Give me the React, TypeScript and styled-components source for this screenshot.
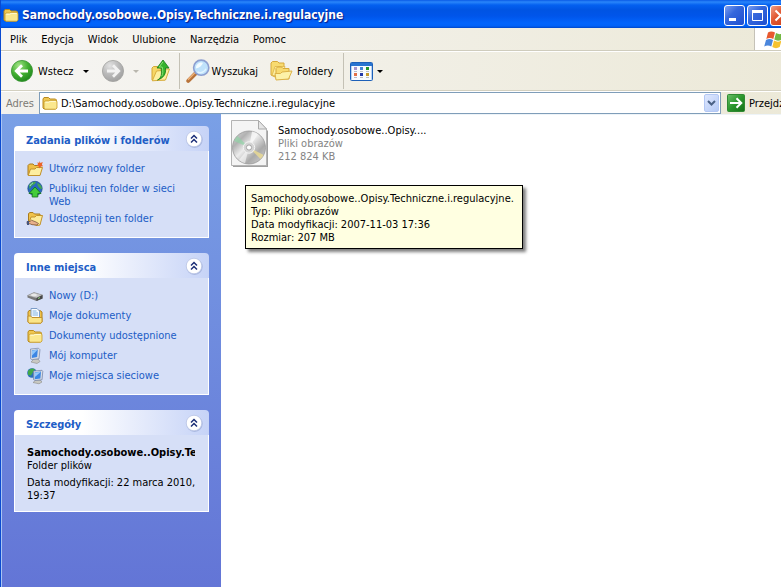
import React from "react";
import styled, { createGlobalStyle, css } from "styled-components";

const GlobalStyle = createGlobalStyle`
  * { box-sizing: border-box; }
  html, body { margin: 0; padding: 0; background: #fff; }
  body, button, input {
    font-family: "DejaVu Sans Condensed", "DejaVu Sans", Tahoma, sans-serif;
    font-size: 11px;
    line-height: 13px;
    color: #000;
  }
  button { margin: 0; padding: 0; border: 0; background: none; white-space: nowrap; }
  svg { display: block; flex: none; overflow: visible; }
`;

const Screen = styled.div`
  min-height: 100vh;
  overflow: hidden;
  display: flex;
`;

/* The window reaches past the right edge of the screen. */
const Window = styled.div`
  flex: none;
  width: calc(100% + 14px);
  display: flex;
  flex-direction: column;
  border-left: 1px solid #0a4ad0;
  background: #fff;
`;

const TitleBar = styled.header`
  height: 28px;
  padding: 2px 4px 0 2px;
  display: flex;
  align-items: center;
  gap: 3px;
  background: linear-gradient(#0a5ae6 0, #2a86fa 2px, #0460f0 5px, #0054e3 10px, #0055ea 16px, #0264fc 23px, #0162f8 26px, #0046c8 28px);
`;

const Title = styled.h1`
  flex: 1;
  margin: 0;
  font: bold 12px/18px "DejaVu Sans Condensed", "DejaVu Sans", sans-serif;
  color: #fff;
  text-shadow: 1px 1px 1px #0a1883;
  white-space: nowrap;
`;

const WindowControls = styled.div`
  display: flex;
  gap: 2px;
`;

const WindowButton = styled.button<{ $close?: boolean }>`
  width: 21px;
  height: 21px;
  border: 1px solid #fff;
  border-radius: 3px;
  display: grid;
  place-items: center;
  background: ${(p) =>
    p.$close
      ? "linear-gradient(135deg, #f0a088, #e25a34 40%, #c83814)"
      : "linear-gradient(135deg, #7c9ff0, #3567dc 40%, #1f4fd0)"};
`;

const MenuRow = styled.div`
  height: 23px;
  display: flex;
  border-bottom: 1px solid #cfccbd;
  background: linear-gradient(90deg, #f6f5f3, #ece9d8);
`;

const MenuBar = styled.nav`
  flex: 1;
  display: flex;
  align-items: center;
  padding-left: 2px;
`;

const MenuButton = styled.button`
  height: 100%;
  padding: 0 7px;
`;

const Brand = styled.div`
  width: 41px;
  padding-left: 9px;
  display: flex;
  align-items: center;
  border-left: 1px solid #c5c2b8;
  background: #fff;
`;

const Toolbar = styled.div`
  height: 40px;
  padding-left: 9px;
  display: flex;
  align-items: center;
  border-top: 1px solid #fff;
  border-bottom: 1px solid #d3d0c0;
  background: linear-gradient(90deg, #f6f5f3, #ece9d8);
`;

const ToolButton = styled.button<{ $gap?: number; $after?: number }>`
  height: 32px;
  display: flex;
  align-items: center;
  gap: ${(p) => p.$gap ?? 4}px;
  margin-right: ${(p) => p.$after ?? 0}px;
`;

const Separator = styled.div`
  width: 1px;
  height: 36px;
  margin-right: 6px;
  background: #c4c1b5;
`;

const AddressBar = styled.div`
  height: 23px;
  display: flex;
  align-items: center;
  border-top: 1px solid #fff;
  background: linear-gradient(90deg, #f2f1ed, #ece9d8);
`;

const AddressLabel = styled.label`
  width: 38px;
  padding-left: 5px;
  color: #7c7a74;
`;

const AddressField = styled.div`
  flex: 1;
  height: 22px;
  padding: 0 1px 0 2px;
  display: flex;
  align-items: center;
  gap: 3px;
  border: 1px solid #7f9db9;
  background: #fff;
`;

const AddressInput = styled.input`
  flex: 1;
  min-width: 0;
  padding: 0;
  border: 0;
  outline: 0;
  background: transparent;
`;

const DropButton = styled.button`
  width: 15px;
  height: 18px;
  border: 1px solid #b4c8f4;
  border-radius: 2px;
  display: grid;
  place-items: center;
  background: linear-gradient(135deg, #dfe8fe, #b5caf6);
`;

const GoButton = styled.button`
  width: 68px;
  margin-left: 6px;
  display: flex;
  align-items: center;
  gap: 4px;
`;

const Body = styled.div`
  flex: 1;
  display: flex;
`;

const Sidebar = styled.aside`
  flex: none;
  width: 220px;
  padding: 12px;
  display: flex;
  flex-direction: column;
  gap: 15px;
  border-left: 1px solid #a8c4f4;
  background: linear-gradient(#7aa0e6, #6375d6);
`;

const Panel = styled.section`
  border-radius: 4px 4px 0 0;
  overflow: hidden;
`;

const PanelHeader = styled.div`
  height: 25px;
  padding: 0 6px 0 12px;
  display: flex;
  align-items: center;
  justify-content: space-between;
  background: linear-gradient(90deg, #fff 35%, #c6d3f7);
`;

const PanelTitle = styled.h2`
  margin: 0;
  padding-top: 4px;
  font-size: 11px;
  line-height: 13px;
  font-weight: bold;
  color: #215dc6;
  white-space: nowrap;
`;

const PanelBody = styled.div`
  padding: 11px 8px 9px 12px;
  display: flex;
  flex-direction: column;
  gap: 4px;
  border: 1px solid #fff;
  border-top: 0;
  background: #d6dff7;
`;

const TaskLink = styled.a`
  min-height: 16px;
  padding-right: 8px;
  display: flex;
  align-items: flex-start;
  gap: 6px;
  color: #215dc6;
  text-decoration: none;
`;

const IconSlot = styled.span`
  flex: none;
  width: 16px;
  height: 13px;
  display: flex;
  align-items: center;
`;

const DetailText = styled.p<{ $strong?: boolean }>`
  margin: 0;
  ${(p) =>
    p.$strong &&
    css`
      margin-right: 5px;
      font-weight: bold;
      white-space: nowrap;
      overflow: hidden;
    `}
`;

const FileArea = styled.main`
  position: relative;
  flex: 1;
  padding: 5px 10px;
  border-top: 1px solid #eef4f8;
`;

const FileTile = styled.button`
  display: flex;
  gap: 10px;
  text-align: left;
`;

const FileMeta = styled.span`
  display: block;
  padding-top: 4px;
`;

const FileLine = styled.span<{ $muted?: boolean }>`
  display: block;
  color: ${(p) => (p.$muted ? "#848484" : "#000")};
`;

const Tooltip = styled.div`
  position: absolute;
  left: 24px;
  top: 70px;
  min-width: 278px;
  padding: 6px 5px 4px;
  border: 1px solid #000;
  background: #ffffe1;
  box-shadow: 3px 3px 3px rgba(0, 0, 0, 0.5);
  white-space: nowrap;
`;

/* ---------- icons ---------- */

const FolderIcon = ({ size = 16 }: { size?: number }) => (
  <svg width={size} height={size} viewBox="0 0 16 16">
    <path d="M1 13V4l1-1.5h4.5L8 4h5.5l1 1v8l-1 1H2z" fill="#efc650" stroke="#b88a1e" />
    <path d="M2 13V7.5L3 6h3.5L8 5.5h6.5L15 7v6l-1.5 1.2H3z" fill="#fbe88e" stroke="#c79a2a" strokeWidth=".8" />
    <path d="M3.3 7.2h3.5L8.2 6.4h5.6" stroke="#fffbd8" fill="none" />
  </svg>
);

const Caret = ({ muted }: { muted?: boolean }) => (
  <svg width="6" height="3" viewBox="0 0 6 3">
    <path d="M0 0h6L3 3z" fill={muted ? "#b9b7ae" : "#000"} />
  </svg>
);

const CircleArrow = ({ forward }: { forward?: boolean }) => {
  const id = forward ? "fwd" : "back";
  return (
    <svg width="24" height="24" viewBox="0 0 24 24">
      <defs>
        <radialGradient id={id} cx=".35" cy=".25" r=".85">
          <stop offset="0" stopColor={forward ? "#e2e2e2" : "#a2e486"} />
          <stop offset=".5" stopColor={forward ? "#b9b9b9" : "#43b032"} />
          <stop offset="1" stopColor={forward ? "#9b9b9b" : "#19801a"} />
        </radialGradient>
      </defs>
      <circle cx="12" cy="12" r="10.6" fill={`url(#${id})`} stroke={forward ? "#a2a2a0" : "#3a9433"} strokeWidth=".8" />
      <path
        d={forward ? "M6 12h11M12 6.3l5.7 5.7-5.7 5.7" : "M18 12H7M12 6.3L6.3 12l5.7 5.7"}
        fill="none"
        stroke={forward ? "#f2f2f2" : "#fff"}
        strokeWidth="2.8"
      />
    </svg>
  );
};

const UpFolder = () => (
  <svg width="20" height="24" viewBox="0 0 20 24">
    <path d="M1 21V9l1.5-1.5h4L8 9h6v12z" fill="#f6d765" stroke="#d3a637" />
    <path d="M1.3 21.8L5.5 12l5-.5L12 10h6.5l-4 11z" fill="#fdf0a0" stroke="#d9ae40" />
    <path d="M6.5 21c4-2 4.5-6 3.5-12H6l6-8 6 8h-3.5c.8 6-2 10-8 12z" fill="#35b22c" stroke="#157a16" strokeWidth=".8" />
    <path d="M12 2.8L8.2 8h3c1 4 .8 7-.5 9.3" fill="none" stroke="#8ae070" />
  </svg>
);

const SearchIcon = () => (
  <svg width="24" height="24" viewBox="0 0 24 24">
    <path d="M2.2 21.8L10 14" stroke="#b8733a" strokeWidth="4" strokeLinecap="round" />
    <path d="M2 20.8L9 13.8" stroke="#f0b47a" strokeWidth="1.3" />
    <circle cx="15.2" cy="8.7" r="7.6" fill="#bfe2fb" stroke="#8d9fd0" strokeWidth="1.6" />
    <path d="M10 9.5a5.400 5.400 0 0 1 7-5.800c-1 3-3.500 5-7 5.800z" fill="#f2fbff" />
    <path d="M11.5 12.8c3 1.800 7 .6 8.500-3" stroke="#e3f5ff" strokeWidth="1.5" fill="none" />
  </svg>
);

const FoldersIcon = () => (
  <svg width="23" height="22" viewBox="0 0 23 22">
    <path d="M1 15V3l1.500-1.500h5L9 3h5v4L5 17z" fill="#f8db70" stroke="#d6a93c" />
    <path d="M2 15.500L5 6.500h10L12 16z" fill="#fdf0a4" stroke="#dcb248" strokeWidth=".8" />
    <path d="M6 19V8.500L7.500 7h4L13 8.500h6V19z" fill="#f8db70" stroke="#d6a93c" />
    <path d="M6 20l-1-6.500h5.500L12 12l10-1-3.500 8z" fill="#fdf2a8" stroke="#dcb248" />
  </svg>
);

const ViewsIcon = () => (
  <svg width="23" height="19" viewBox="0 0 23 19">
    <rect x=".5" y=".5" width="22" height="18" rx="1" fill="#f8fbff" stroke="#1d60b8" />
    <path d="M1 1h21v3H1z" fill="#2874d0" />
    <path d="M1.500 4v14M21.500 4v14" stroke="#b8d2f2" />
    {["#a694cc", "#3f84d8", "#239428", "#e27048", "#2238a8", "#c69a2c"].map((c, i) => (
      <rect key={c} x={4 + (i % 3) * 6} y={i < 3 ? 5 : 11} width="3" height="3" fill={c} />
    ))}
    {[4, 10, 16].map((x) => (
      <path key={x} d={`M${x} 9.500h3M${x} 15.500h3`} stroke="#b8bcc8" />
    ))}
  </svg>
);

const FlagIcon = () => (
  <svg width="21" height="19" viewBox="0 0 21 19">
    <path d="M4 2.500C6 1 8.500 1 11 2.500L9.300 9C7 7.500 4.500 7.500 2.300 9z" fill="#e8592f" />
    <path d="M12 3c2.500 1.500 5 1.500 7.500 0l-1.800 6.500c-2.400 1.500-5 1.500-7.400 0z" fill="#73b843" />
    <path d="M2 10c2.400-1.500 4.800-1.300 7 0l-1.700 6.500C5 15 2.500 15 .2 16.500z" fill="#4a86dc" />
    <path d="M10 10.500c2.500 1.500 5 1.500 7.500 0L15.700 17c-2.400 1.500-5 1.500-7.400 0z" fill="#f6c22f" />
  </svg>
);

const GoIcon = () => (
  <svg width="18" height="18" viewBox="0 0 18 18">
    <defs>
      <linearGradient id="go" x2="1" y2="1">
        <stop stopColor="#6cc06a" />
        <stop offset=".5" stopColor="#2a962c" />
        <stop offset="1" stopColor="#157018" />
      </linearGradient>
    </defs>
    <rect x=".5" y=".5" width="17" height="17" rx="1" fill="url(#go)" stroke="#2f8a33" />
    <path d="M3 9h11M9.500 4.200L14.300 9l-4.800 4.800" stroke="#fff" strokeWidth="2" fill="none" />
  </svg>
);

const Chevron = () => (
  <svg width="9" height="6" viewBox="0 0 9 6">
    <path d="M1 1l3.500 3.500L8 1" stroke="#4a6185" strokeWidth="2" fill="none" />
  </svg>
);

const CollapseIcon = () => (
  <svg width="18" height="18" viewBox="0 0 18 18">
    <circle cx="9.500" cy="9.800" r="8.200" fill="#9aaad6" opacity=".7" />
    <circle cx="9" cy="9" r="7.800" fill="#fff" stroke="#b9c4e4" strokeWidth=".8" />
    <path d="M6 8.500l3-3 3 3M6 12.500l3-3 3 3" stroke="#1c2f78" strokeWidth="1.500" fill="none" />
  </svg>
);

const NewFolderIcon = () => (
  <svg width="16" height="16" viewBox="0 0 16 16">
    <path d="M1 14V4.500L2.500 3H6l1.500 1.500H13V14z" fill="#f0bf45" stroke="#a97b1e" />
    <path d="M1.200 14.500L3.500 8H8l1.500-1.500h6L13 14.500z" fill="#fdeea0" stroke="#c2922c" />
    <path d="M12.500 0l.9 2.100L15.800 1l-.9 2.500 1.100 1.700-2.300.2-1.200 2-.8-2.100-2.200-.5L11 3.300l-.6-2 1.800.6z" fill="#ec6428" />
  </svg>
);

const PublishIcon = () => (
  <svg width="16" height="16" viewBox="0 0 16 16">
    <circle cx="8" cy="7.500" r="7.200" fill="#2869bd" stroke="#174a86" strokeWidth=".7" />
    <path d="M2 4c2-3 5-3.500 7-3-1 2-1 2.500-3 3S4 7 2.500 8zM10 2c3 1 5 3 5 6-2 0-4-2-5-6z" fill="#46a850" />
    <path d="M3 5c1-2 2-2.500 3-3" stroke="#a6dcf0" fill="none" />
    <path d="M8 6l6 6.500h-3.200V16H5.200v-3.500H2z" fill="#43cc3a" stroke="#127018" strokeWidth=".8" />
  </svg>
);

const ShareIcon = () => (
  <svg width="16" height="16" viewBox="0 0 16 16">
    <path d="M1.500 11V2.500L3 1.500h3L7.500 3H13v8z" fill="#f0c24a" stroke="#a97b1e" />
    <path d="M2 12L4 6h4l1.500-1.500h6L13 14l-3 .5z" fill="#fdeb98" stroke="#c2922c" />
    <path d="M0 10.500h3l1.500-1.300L9 11l2.500 1.500L10 14l-5-.3L3 12.800H0z" fill="#e8b08a" stroke="#6e4b38" strokeWidth=".7" />
    <path d="M0 10v4h2v-4z" fill="#45557e" />
  </svg>
);

const DriveIcon = () => (
  <svg width="16" height="16" viewBox="0 0 16 16">
    <path d="M.5 7.500L7 4.500l8.500 2.500v3.500L9.500 13 .5 9.500z" fill="#777" />
    <path d="M.5 7.500L7 4.500l8.500 2.500-6 3z" fill="#c9c9c9" stroke="#8d8d8d" strokeWidth=".5" />
    <path d="M9.500 10l6-3v3.500L9.500 13z" fill="#484848" />
    <ellipse cx="7" cy="7" rx="3" ry="1.200" fill="#e8e8e8" />
    <path d="M11 10.500l2-1" stroke="#8fd27a" />
  </svg>
);

const DocumentsIcon = () => (
  <svg width="16" height="16" viewBox="0 0 16 16">
    <path d="M1 14V4l1-1.500h11L15 4v10l-1 1H2z" fill="#f0c24a" stroke="#b0811c" />
    <path d="M4 .5h6L12.500 3v8H4z" fill="#f8fcff" stroke="#7c9cc8" />
    <path d="M5.500 3h4M5.500 5h5.500M5.500 7h5.500" stroke="#7fb2e2" />
    <path d="M1 8h2.500L5 9.500h10V14l-1 1.200H2L1 14z" fill="#fbe588" stroke="#c2922c" />
  </svg>
);

const ComputerIcon = () => (
  <svg width="16" height="16" viewBox="0 0 16 16">
    <path d="M4 14l3-3h4l2 2.500-3 2z" fill="#c9c9c2" stroke="#8b8b86" strokeWidth=".6" />
    <path d="M3.500 1l8-.8 1.500 1.500-1 9-7 1-1.500-1z" fill="#d8dce4" stroke="#7585a6" strokeWidth=".7" />
    <path d="M4.800 2.200l6-.6-.7 7.500-5.300.8z" fill="#3c86e4" />
    <path d="M5 2.400l5.600-.6L5 7.500z" fill="#90c6fa" />
  </svg>
);

const NetworkIcon = () => (
  <svg width="16" height="16" viewBox="0 0 16 16">
    <circle cx="5" cy="5" r="4.800" fill="#2b6fb8" />
    <path d="M1 3c2-3 5-3 7-2L6 4 4 7.500 1 7z" fill="#42a84a" />
    <path d="M6 14.500L9 12h4l2 2-3 1.800z" fill="#c9c9c2" stroke="#8b8b86" strokeWidth=".6" />
    <path d="M6.500 3l8.500-.7.800 1-.8 8.500-7 .7-1.500-1z" fill="#d8dce4" stroke="#6d7da2" strokeWidth=".7" />
    <path d="M7.700 4.200l6.300-.6-.6 7-5.700.7z" fill="#3c86e4" />
    <path d="M7.900 4.400l5.800-.5-5.800 5z" fill="#96cafa" />
  </svg>
);

const DiscImageIcon = () => (
  <svg width="37" height="47" viewBox="0 0 37 47">
    <defs>
      <linearGradient id="disc" x2="1" y2="1">
        <stop stopColor="#d9d9d9" />
        <stop offset=".25" stopColor="#b2b2b2" />
        <stop offset=".45" stopColor="#ececec" />
        <stop offset=".7" stopColor="#a9a9a9" />
        <stop offset="1" stopColor="#d6d6d6" />
      </linearGradient>
    </defs>
    <path d="M2 2h26l9 9v36H2z" fill="#777" opacity=".7" />
    <path d="M.5.5h27L35.500 9v36.500H.5z" fill="#f4f4f4" stroke="#b3b3b3" />
    <path d="M27.500.5V9h8z" fill="#e5e5e5" stroke="#aaa" />
    <circle cx="18" cy="27.500" r="16.500" fill="url(#disc)" stroke="#999" strokeWidth=".8" />
    <path d="M18 27.500L3 21a16.500 16.500 0 0 1 3.500-5z" fill="#8ed6a4" opacity=".65" />
    <path d="M18 27.500L21 11.500a16.500 16.500 0 0 1 6 2.500z" fill="#fafafa" opacity=".8" />
    <path d="M18 27.500L29.500 39a16.500 16.500 0 0 0 3-4z" fill="#ecdc92" opacity=".8" />
    <path d="M18 27.500L8 40a16.500 16.500 0 0 0 6 3.300z" fill="#fff" opacity=".55" />
    <circle cx="18" cy="27.500" r="5.700" fill="#d4d4d4" stroke="#f4f4f4" />
    <circle cx="18" cy="27.500" r="2.600" fill="#fff" stroke="#a4a4a4" />
  </svg>
);

/* ---------- page ---------- */

const menus = ["Plik", "Edycja", "Widok", "Ulubione", "Narzędzia", "Pomoc"];

const tasks = [
  { label: "Utwórz nowy folder", icon: <NewFolderIcon /> },
  { label: "Publikuj ten folder w sieci Web", icon: <PublishIcon /> },
  { label: "Udostępnij ten folder", icon: <ShareIcon /> },
];

const places = [
  { label: "Nowy (D:)", icon: <DriveIcon /> },
  { label: "Moje dokumenty", icon: <DocumentsIcon /> },
  { label: "Dokumenty udostępnione", icon: <FolderIcon /> },
  { label: "Mój komputer", icon: <ComputerIcon /> },
  { label: "Moje miejsca sieciowe", icon: <NetworkIcon /> },
];

const SidePanel = ({ title, children }: { title: string; children: React.ReactNode }) => (
  <Panel>
    <PanelHeader>
      <PanelTitle>{title}</PanelTitle>
      <button type="button" aria-label={`Zwiń: ${title}`}>
        <CollapseIcon />
      </button>
    </PanelHeader>
    <PanelBody>{children}</PanelBody>
  </Panel>
);

const LinkList = ({ items }: { items: { label: string; icon: React.ReactNode }[] }) => (
  <>
    {items.map((item) => (
      <TaskLink key={item.label} href="#">
        <IconSlot>{item.icon}</IconSlot>
        <span>{item.label}</span>
      </TaskLink>
    ))}
  </>
);

export default function App() {
  return (
    <>
      <GlobalStyle />
      <Screen>
        <Window>
          <TitleBar>
            <FolderIcon />
            <Title>Samochody.osobowe..Opisy.Techniczne.i.regulacyjne</Title>
            <WindowControls>
              <WindowButton type="button" aria-label="Minimalizuj">
                <svg width="13" height="13" viewBox="0 0 13 13">
                  <path d="M1 9h7v3H1z" fill="#fff" />
                </svg>
              </WindowButton>
              <WindowButton type="button" aria-label="Maksymalizuj">
                <svg width="13" height="13" viewBox="0 0 13 13">
                  <path d="M1.500 2v9.500h10V2" stroke="#fff" fill="none" />
                  <path d="M1 1h11v3H1z" fill="#fff" />
                </svg>
              </WindowButton>
              <WindowButton type="button" aria-label="Zamknij" $close>
                <svg width="13" height="13" viewBox="0 0 13 13">
                  <path d="M1.500 1.500l10 10M11.500 1.500l-10 10" stroke="#fff" strokeWidth="2" />
                </svg>
              </WindowButton>
            </WindowControls>
          </TitleBar>

          <MenuRow>
            <MenuBar>
              {menus.map((m) => (
                <MenuButton key={m} type="button">
                  {m}
                </MenuButton>
              ))}
            </MenuBar>
            <Brand>
              <FlagIcon />
            </Brand>
          </MenuRow>

          <Toolbar>
            <ToolButton type="button" $after={9}>
              <CircleArrow />
              Wstecz
            </ToolButton>
            <ToolButton type="button" aria-label="Historia wstecz" $after={12}>
              <Caret />
            </ToolButton>
            <ToolButton type="button" aria-label="Dalej" $after={8}>
              <CircleArrow forward />
            </ToolButton>
            <ToolButton type="button" aria-label="Historia dalej" $after={12}>
              <Caret muted />
            </ToolButton>
            <ToolButton type="button" aria-label="Do góry" $after={8}>
              <UpFolder />
            </ToolButton>
            <Separator />
            <ToolButton type="button" $gap={2} $after={12}>
              <SearchIcon />
              Wyszukaj
            </ToolButton>
            <ToolButton type="button" $after={10}>
              <FoldersIcon />
              Foldery
            </ToolButton>
            <Separator />
            <ToolButton type="button" aria-label="Widoki">
              <ViewsIcon />
              <Caret />
            </ToolButton>
          </Toolbar>

          <AddressBar>
            <AddressLabel htmlFor="address">Adres</AddressLabel>
            <AddressField>
              <FolderIcon />
              <AddressInput id="address" defaultValue="D:\Samochody.osobowe..Opisy.Techniczne.i.regulacyjne" />
              <DropButton type="button" aria-label="Pokaż listę adresów">
                <Chevron />
              </DropButton>
            </AddressField>
            <GoButton type="button">
              <GoIcon />
              Przejdź
            </GoButton>
          </AddressBar>

          <Body>
            <Sidebar>
              <SidePanel title="Zadania plików i folderów">
                <LinkList items={tasks} />
              </SidePanel>
              <SidePanel title="Inne miejsca">
                <LinkList items={places} />
              </SidePanel>
              <SidePanel title="Szczegóły">
                <div>
                  <DetailText $strong>Samochody.osobowe..Opisy.Techniczne.i.regulacyjne</DetailText>
                  <DetailText>Folder plików</DetailText>
                </div>
                <DetailText>Data modyfikacji: 22 marca 2010, 19:37</DetailText>
              </SidePanel>
            </Sidebar>

            <FileArea>
              <FileTile type="button" aria-describedby="file-tip">
                <DiscImageIcon />
                <FileMeta>
                  <FileLine>Samochody.osobowe..Opisy....</FileLine>
                  <FileLine $muted>Pliki obrazów</FileLine>
                  <FileLine $muted>212 824 KB</FileLine>
                </FileMeta>
              </FileTile>
              <Tooltip role="tooltip" id="file-tip">
                Samochody.osobowe..Opisy.Techniczne.i.regulacyjne.
                <br />
                Typ: Pliki obrazów
                <br />
                Data modyfikacji: 2007-11-03 17:36
                <br />
                Rozmiar: 207 MB
              </Tooltip>
            </FileArea>
          </Body>
        </Window>
      </Screen>
    </>
  );
}
